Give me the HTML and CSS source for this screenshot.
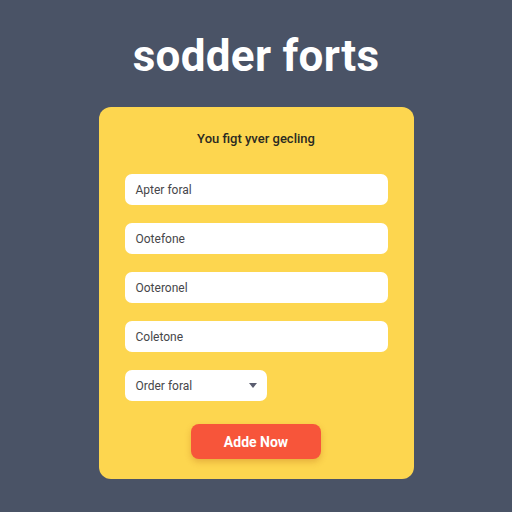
FILE: index.html
```html
<!DOCTYPE html>
<html>
<head>
<meta charset="utf-8">
<link rel="stylesheet" href="styles.css">
</head>
<body>
<h1 class="title">sodder forts</h1>
<div class="card">
  <p class="subtitle">You figt yver gecling</p>
  <div class="fields">
    <div class="field">Apter foral</div>
    <div class="field">Ootefone</div>
    <div class="field">Ooteronel</div>
    <div class="field">Coletone</div>
    <div class="field select">Order foral<span class="caret"></span></div>
  </div>
  <button class="btn">Adde Now</button>
</div>
</body>
</html>
```
FILE: styles.css
```css
html, body {
  margin: 0;
  padding: 0;
}
body {
  width: 512px;
  height: 512px;
  background: #4a5366;
  font-family: Roboto, "Liberation Sans", sans-serif;
  overflow: hidden;
}
.title {
  margin: 0;
  padding-top: 32px;
  height: 74px;
  box-sizing: border-box;
  text-align: center;
  color: #ffffff;
  font-size: 44px;
  font-weight: 700;
  line-height: 48px;
  letter-spacing: 0.3px;
}
.card {
  width: 315px;
  height: 372px;
  margin: 33px auto 0;
  box-sizing: border-box;
  background: #fdd64f;
  border-radius: 12px;
  padding: 24px 26px 0;
  display: flex;
  flex-direction: column;
  align-items: center;
}
.subtitle {
  margin: 0;
  height: 16px;
  line-height: 16px;
  font-size: 13px;
  font-weight: 500;
  color: #2b2a22;
}
.fields {
  margin-top: 27px;
  width: 100%;
  display: flex;
  flex-direction: column;
  gap: 18px;
}
.field {
  height: 31px;
  box-sizing: border-box;
  background: #ffffff;
  border-radius: 7px;
  padding: 0 11px;
  display: flex;
  align-items: center;
  font-size: 12px;
  color: #46464a;
}
.select {
  width: 142px;
  justify-content: space-between;
  padding-right: 10px;
}
.caret {
  width: 0;
  height: 0;
  border-left: 4px solid transparent;
  border-right: 4px solid transparent;
  border-top: 5px solid #5a5d70;
}
.btn {
  margin-top: 23px;
  width: 130px;
  height: 35px;
  border: none;
  border-radius: 8px;
  background: #f7553a;
  color: #ffffff;
  font-family: Roboto, "Liberation Sans", sans-serif;
  font-size: 14px;
  font-weight: 700;
  box-shadow: 0 3px 6px rgba(180, 90, 20, 0.3);
}
```
